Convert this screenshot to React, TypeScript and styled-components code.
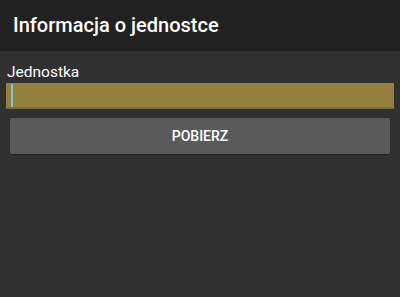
import React from "react";
import styled, { createGlobalStyle } from "styled-components";

const Global = createGlobalStyle`
  html, body { margin: 0; padding: 0; background: #303030; }
  body { font-family: Roboto, "Noto Sans", sans-serif; }
`;

const Page = styled.div`
  width: 400px;
  height: 297px;
  background: #303030;
  display: flex;
  flex-direction: column;
`;

const Toolbar = styled.header`
  height: 51px;
  background: #212121;
  display: flex;
  align-items: center;
  padding-left: 13px;
  box-sizing: border-box;
`;

const Title = styled.h1`
  margin: 0;
  font-size: 20px;
  font-weight: 500;
  color: #ffffff;
  line-height: 1;
  padding-bottom: 2px;
`;

const Content = styled.div`
  display: flex;
  flex-direction: column;
  padding: 12px 6px 0 6px;
`;

const Label = styled.label`
  font-size: 15.5px;
  color: #ffffff;
  line-height: 18px;
  padding-left: 1px;
`;

const Field = styled.div`
  margin-top: 2px;
  height: 26px;
  background: #958040;
  border-bottom: 2px solid #7d6c37;
  box-sizing: border-box;
  position: relative;
`;

const Caret = styled.span`
  position: absolute;
  left: 5px;
  top: 1px;
  width: 2px;
  height: 23px;
  background: #7fc9c9;
`;

const Button = styled.button`
  margin: 9px 4px 0 4px;
  height: 36px;
  background: #5a5a5a;
  border: none;
  border-radius: 2px;
  box-shadow: 0 1px 1px rgba(0, 0, 0, 0.3);
  color: #ffffff;
  font-family: Roboto, "Noto Sans", sans-serif;
  font-size: 14px;
  font-weight: 500;
`;

export default function App() {
  return (
    <Page>
      <Global />
      <Toolbar>
        <Title>Informacja o jednostce</Title>
      </Toolbar>
      <Content>
        <Label>Jednostka</Label>
        <Field>
          <Caret />
        </Field>
        <Button>POBIERZ</Button>
      </Content>
    </Page>
  );
}
